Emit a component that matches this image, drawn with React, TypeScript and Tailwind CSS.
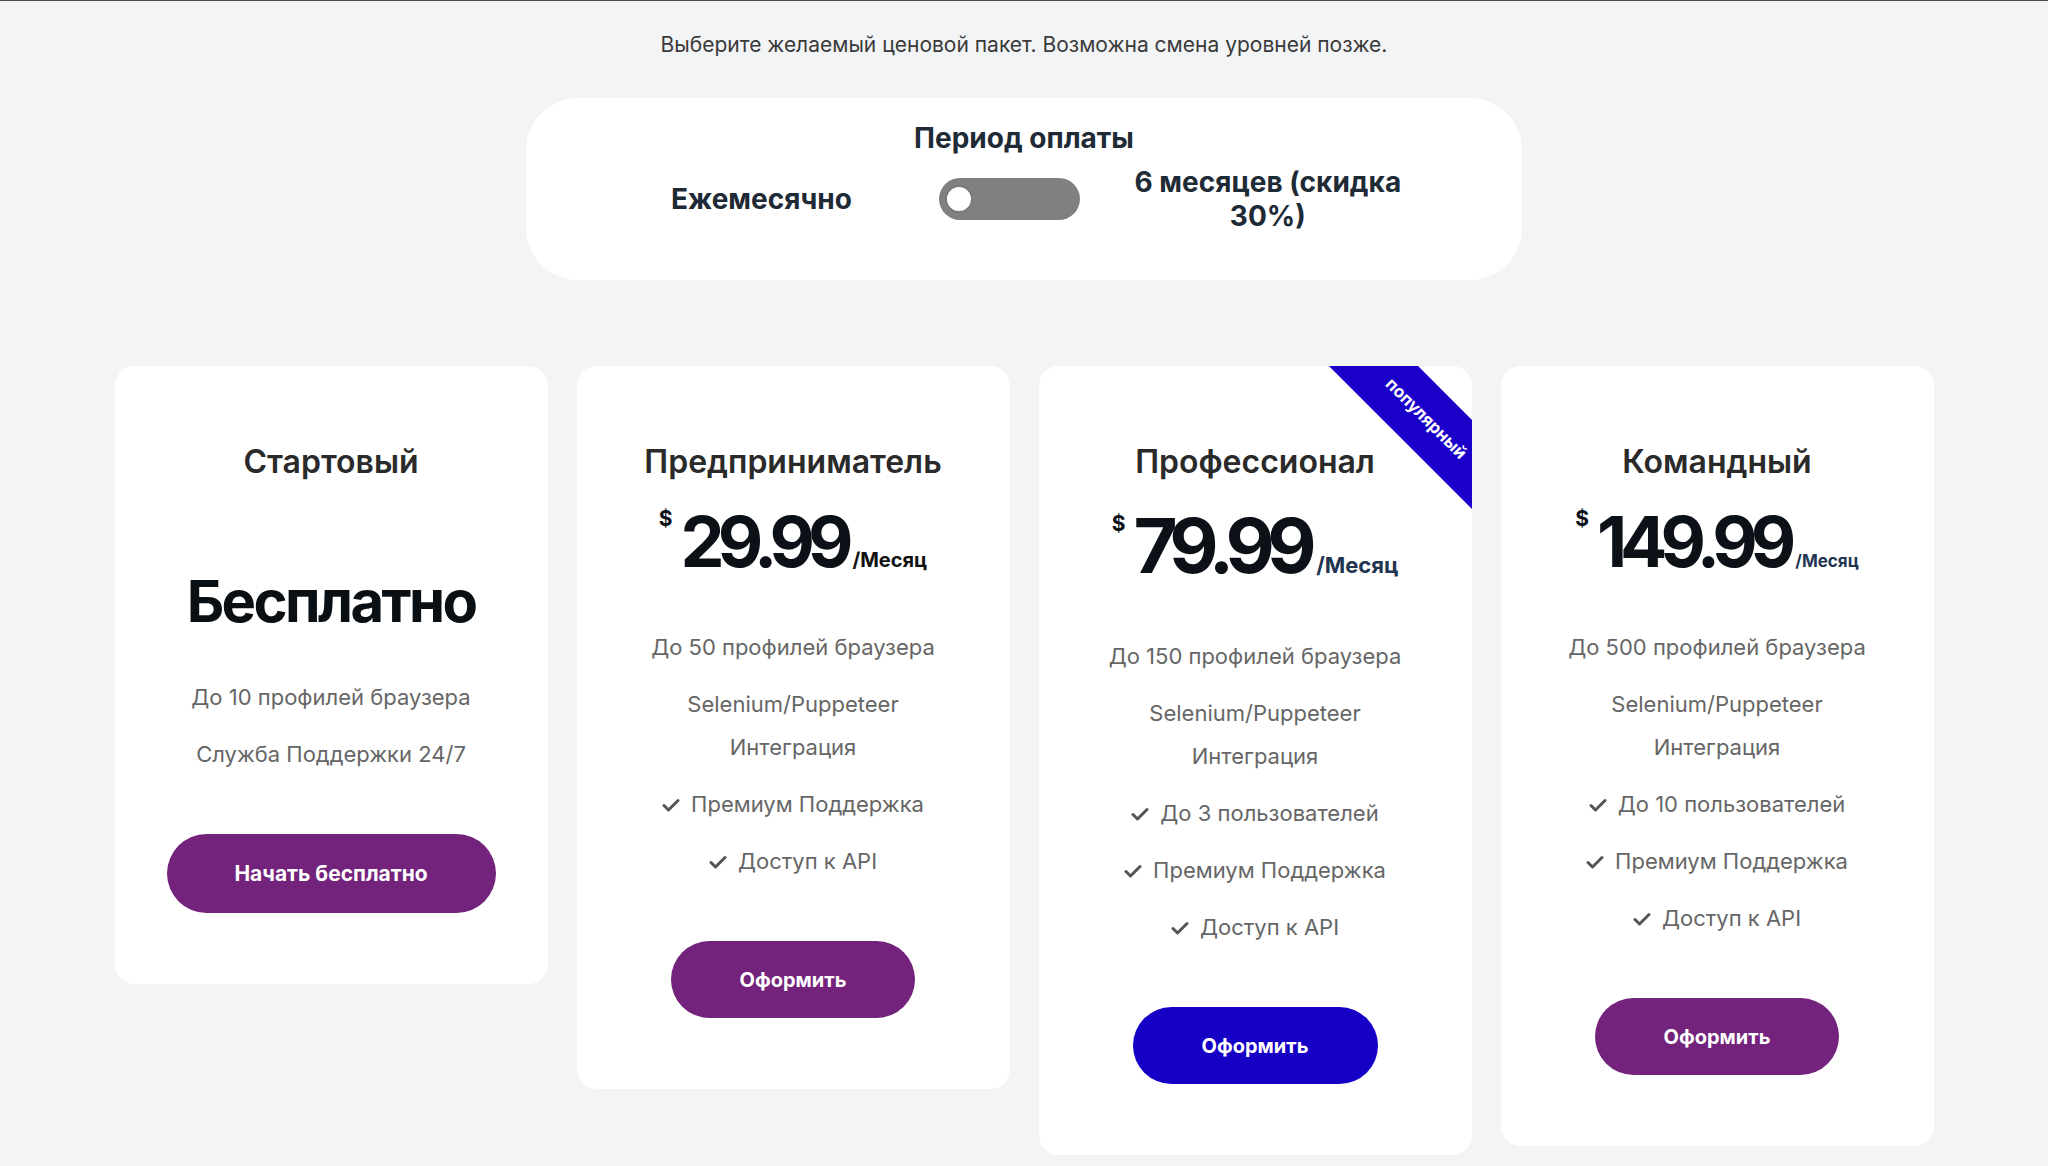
import { useState } from "react";

// тарифы
interface Plan {
  id: string;
  title: string;
  price?: string;
  features: { text: string; check?: boolean }[];
  cta: string;
  popular?: boolean;
}

const plans: Plan[] = [
  {
    id: "starter",
    title: "Стартовый",
    features: [{ text: "До 10 профилей браузера" }, { text: "Служба Поддержки 24/7" }],
    cta: "Начать бесплатно",
  },
  {
    id: "entrepreneur",
    title: "Предприниматель",
    price: "29.99",
    features: [
      { text: "До 50 профилей браузера" },
      { text: "Selenium/Puppeteer Интеграция" },
      { text: "Премиум Поддержка", check: true },
      { text: "Доступ к API", check: true },
    ],
    cta: "Оформить",
  },
  {
    id: "pro",
    title: "Профессионал",
    price: "79.99",
    features: [
      { text: "До 150 профилей браузера" },
      { text: "Selenium/Puppeteer Интеграция" },
      { text: "До 3 пользователей", check: true },
      { text: "Премиум Поддержка", check: true },
      { text: "Доступ к API", check: true },
    ],
    cta: "Оформить",
    popular: true,
  },
  {
    id: "team",
    title: "Командный",
    price: "149.99",
    features: [
      { text: "До 500 профилей браузера" },
      { text: "Selenium/Puppeteer Интеграция" },
      { text: "До 10 пользователей", check: true },
      { text: "Премиум Поддержка", check: true },
      { text: "Доступ к API", check: true },
    ],
    cta: "Оформить",
  },
];

const CheckIcon = () => (
  <svg width="18" height="14" viewBox="0 0 18 14" className="mr-[11px] shrink-0">
    <path d="M2 7.5l4.5 4.5L16 2.5" fill="none" stroke="#555" strokeWidth="3" strokeLinecap="round" strokeLinejoin="round" />
  </svg>
);

const Price = ({ plan }: { plan: Plan }) => {
  if (plan.id === "pro") {
    return (
      <div className="mt-[21px] flex items-baseline justify-center">
        <span className="self-start mt-[6px] mr-[8px] text-[21px] font-bold leading-none text-[#0b1117]">$</span>
        <span className="text-[76px] font-bold leading-none tracking-[-0.1em] text-[#0b1117]">{plan.price}</span>
        <span className="ml-[7px] text-[22px] font-bold text-[#1f3550]">/Месяц</span>
      </div>
    );
  }
  if (plan.id === "team") {
    return (
      <div className="mt-[21px] flex items-baseline justify-center">
        <span className="self-start mt-[1px] mr-[8px] text-[21px] font-bold leading-none text-[#0b1117]">$</span>
        <span className="text-[70px] font-bold leading-none tracking-[-0.1em] text-[#0b1117]">{plan.price}</span>
        <span className="ml-[6px] text-[17px] font-bold text-[#1f3550]">/Месяц</span>
      </div>
    );
  }
  return (
    <div className="mt-[21px] flex items-baseline justify-center">
      <span className="self-start mt-[1px] mr-[8px] text-[21px] font-bold leading-none text-[#0b1117]">$</span>
      <span className="text-[70px] font-bold leading-none tracking-[-0.1em] text-[#0b1117]">{plan.price}</span>
      <span className="ml-[6px] text-[20px] font-bold text-[#111]">/Месяц</span>
    </div>
  );
};

const PlanCard = ({ plan }: { plan: Plan }) => {
  const btn =
    plan.id === "pro"
      ? "bg-[#1600c6] w-[245px] h-[77px] text-[20px]"
      : plan.id === "starter"
      ? "bg-[#74237c] w-[329px] h-[79px] text-[21px]"
      : "bg-[#74237c] w-[244px] h-[77px] text-[20px]";

  return (
    <div className="relative w-[433px] shrink-0 overflow-hidden rounded-[20px] bg-white pt-[72px] pb-[71px] flex flex-col items-center">
      {plan.popular && (
        <div className="absolute left-[242px] top-[26px] w-[300px] h-[63px] rotate-45 bg-[#1a00c9] flex items-center justify-center pr-[14px]">
          <span className="text-[17px] font-bold text-white">популярный</span>
        </div>
      )}

      {/* заголовок */}
      <h3 className="text-[32px] leading-[48px] font-semibold text-[#2a2a2a]">{plan.title}</h3>

      {plan.price ? (
        <Price plan={plan} />
      ) : (
        <div className="mt-[86px] text-[58px] leading-none font-bold tracking-[-0.045em] text-[#0a0f14]">Бесплатно</div>
      )}

      <ul
        className={
          plan.price
            ? plan.id === "pro"
              ? "mt-[52px] flex flex-col items-center gap-[14px]"
              : "mt-[49px] flex flex-col items-center gap-[14px]"
            : "mt-[46px] flex flex-col items-center gap-[14px]"
        }
      >
        {plan.features.map((f) => (
          <li key={f.text} className="flex items-center justify-center text-center text-[22px] leading-[43px] text-[#666] w-[320px]">
            {f.check && <CheckIcon />}
            <span>{f.text}</span>
          </li>
        ))}
      </ul>

      <button className={`${btn} mt-[58px] rounded-full text-white font-bold`}>{plan.cta}</button>
    </div>
  );
};

const App = () => {
  const [halfYear, setHalfYear] = useState(false);

  return (
    <div
      className="min-h-screen bg-[#f3f4f6] border-t border-[#4d4d4d] pt-[29px]"
      style={{ fontFamily: "Inter, 'Noto Sans', sans-serif" }}
    >
      <p className="text-center text-[21px] leading-[30px] text-[#3a3a3a]">
        Выберите желаемый ценовой пакет. Возможна смена уровней позже.
      </p>

      {/* период оплаты */}
      <div className="mx-auto mt-[38px] w-[996px] h-[182px] rounded-[52px] bg-white pt-[23px]">
        <h2 className="text-center text-[28px] leading-[34px] font-bold text-[#1e2b36]">Период оплаты</h2>
        <div className="mt-[10px] flex items-center pl-[145px]">
          <span className="text-[28px] leading-[34px] font-bold text-[#1e2b36]">Ежемесячно</span>
          <button
            onClick={() => setHalfYear(!halfYear)}
            className="relative ml-[87px] w-[141px] h-[42px] rounded-full bg-[#808080]"
          >
            <span className="absolute left-[6px] top-[7px] w-[28px] h-[28px] rounded-full bg-white border-2 border-[#7a7a7a]" />
          </button>
          <span className="ml-[33px] w-[310px] text-center text-[28px] leading-[34px] font-bold text-[#1e2b36]">
            6 месяцев (скидка 30%)
          </span>
        </div>
      </div>

      {/* карточки */}
      <div className="mt-[86px] flex items-start justify-center gap-[29px]">
        {plans.map((p) => (
          <PlanCard key={p.id} plan={p} />
        ))}
      </div>
    </div>
  );
};

export default App;
